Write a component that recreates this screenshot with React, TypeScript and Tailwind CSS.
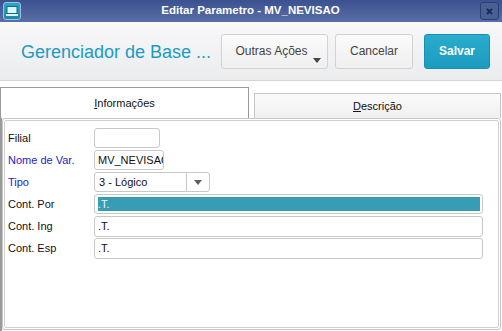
import React from "react";

const font = { fontFamily: '"Liberation Sans", Arial, sans-serif' };

function Row({ label, blue, children }: { label: string; blue?: boolean; children: React.ReactNode }) {
  return (
    <div className="flex items-center h-[20px]">
      <span className={`w-[89px] pl-[3px] text-[11px] ${blue ? "text-[#2323c8]" : "text-[#111]"}`}>{label}</span>
      {children}
    </div>
  );
}

export default function App() {
  return (
    <div className="w-[502px] h-[331px] bg-white overflow-hidden flex flex-col" style={font}>
      {/* Title bar */}
      <div className="h-[22px] flex items-center px-[3px] bg-gradient-to-b from-[#3b5190] to-[#5a6ea7] relative">
        <div className="w-[18px] h-[18px] rounded-[3px] border border-[#9ec3dc] bg-gradient-to-b from-[#2ba7c9] to-[#1b87ab] flex items-center justify-center">
          <svg width="12" height="10" viewBox="0 0 12 10">
            <rect x="1" y="0.5" width="10" height="7" fill="#dff3fa" stroke="#0e6c8a" strokeWidth="1" />
            <rect x="0" y="8" width="12" height="2" fill="#dff3fa" />
          </svg>
        </div>
        <span className="flex-1 text-center text-white text-[11.5px] font-bold">Editar Parametro - MV_NEVISAO</span>
        <div className="w-[19px] h-[18px] rounded-[3px] border border-[#2b3e70] bg-[#4a5f9a] flex items-center justify-center">
          <svg width="7" height="7" viewBox="0 0 7 7">
            <path d="M1 1L6 6M6 1L1 6" stroke="#1e2a44" strokeWidth="1.8" />
          </svg>
        </div>
      </div>

      {/* Header */}
      <div className="h-[59px] flex items-center bg-gradient-to-b from-[#f8f8f9] to-[#ebecee] border-b border-[#d4d4d6]">
        <span className="pl-[21px] text-[18px] text-[#1c9bc3] flex-1 pt-[3px] whitespace-nowrap">Gerenciador de Base ...</span>
        <button className="relative w-[107px] h-[35px] rounded-[3px] border border-[#d2d2d2] bg-gradient-to-b from-[#fbfbfb] to-[#efefef] text-[12px] text-[#444] pr-[6px]">
          Outras Ações
          <svg className="absolute right-[6px] bottom-[5px]" width="8" height="5" viewBox="0 0 8 5">
            <path d="M0 0H8L4 5Z" fill="#444" />
          </svg>
        </button>
        <button className="ml-[7px] w-[78px] h-[35px] rounded-[3px] border border-[#d2d2d2] bg-gradient-to-b from-[#fbfbfb] to-[#efefef] text-[12px] text-[#444]">
          Cancelar
        </button>
        <button className="ml-[11px] mr-[12px] w-[66px] h-[35px] rounded-[3px] border border-[#1a8fb2] bg-gradient-to-b from-[#2aacce] to-[#1a9bc0] text-[12px] font-bold text-white">
          Salvar
        </button>
      </div>

      {/* Tabs */}
      <div className="mt-[6px] h-[31px] flex items-end">
        <div className="w-[249px] h-[31px] border border-b-0 border-[#9a9a9a] bg-white flex items-center justify-center text-[11px] text-[#111]">
          <span><span className="underline">I</span>nformações</span>
        </div>
        <div className="ml-[5px] w-[247px] h-[25px] border border-b-0 border-[#c6c6c6] bg-gradient-to-b from-[#fafafa] to-[#f0f0f0] flex items-center justify-center text-[11px] text-[#111]">
          <span><span className="underline">D</span>escrição</span>
        </div>
      </div>

      {/* Panel */}
      <div className="flex-1 border-l-2 border-[#9a9a9a] flex">
        <div className="flex-1 border border-[#c6c6c6] rounded-[3px] p-[1px] mr-[1px] mb-[1px]">
          <div className="h-full border border-[#d0d0d0] rounded-[2px] pt-[7px] flex flex-col gap-[2px]">
            <Row label="Filial">
              <div className="w-[66px] h-[20px] border border-[#c8c8c8] rounded-[3px] bg-white" />
            </Row>
            <Row label="Nome de Var." blue>
              <div className="w-[70px] h-[20px] border border-[#c8c8c8] rounded-[3px] bg-white overflow-hidden whitespace-nowrap pl-[3px] text-[11px] leading-[18px] text-[#111]">
                MV_NEVISAO
              </div>
            </Row>
            <Row label="Tipo" blue>
              <div className="w-[116px] h-[20px] border border-[#c8c8c8] rounded-[3px] bg-white flex text-[11px] text-[#111]">
                <span className="flex-1 pl-[4px] leading-[18px]">3 - Lógico</span>
                <div className="w-[23px] border-l border-[#c8c8c8] flex items-center justify-center">
                  <svg width="8" height="5" viewBox="0 0 8 5">
                    <path d="M0 0H8L4 5Z" fill="#5a5f6a" />
                  </svg>
                </div>
              </div>
            </Row>
            <Row label="Cont. Por">
              <div className="w-[389px] h-[20px] border border-[#c8c8c8] rounded-[3px] bg-white p-[2px] pl-[3px]">
                <div className="h-full bg-[#379db5] text-[11px] leading-[14px] text-[#e6f6fb]">.T.</div>
              </div>
            </Row>
            <Row label="Cont. Ing">
              <div className="w-[389px] h-[21px] border border-[#c8c8c8] rounded-[3px] bg-white pl-[3px] text-[11px] leading-[19px] text-[#111]">.T.</div>
            </Row>
            <Row label="Cont. Esp">
              <div className="w-[389px] h-[21px] border border-[#c8c8c8] rounded-[3px] bg-white pl-[3px] text-[11px] leading-[19px] text-[#111]">.T.</div>
            </Row>
          </div>
        </div>
      </div>
    </div>
  );
}
